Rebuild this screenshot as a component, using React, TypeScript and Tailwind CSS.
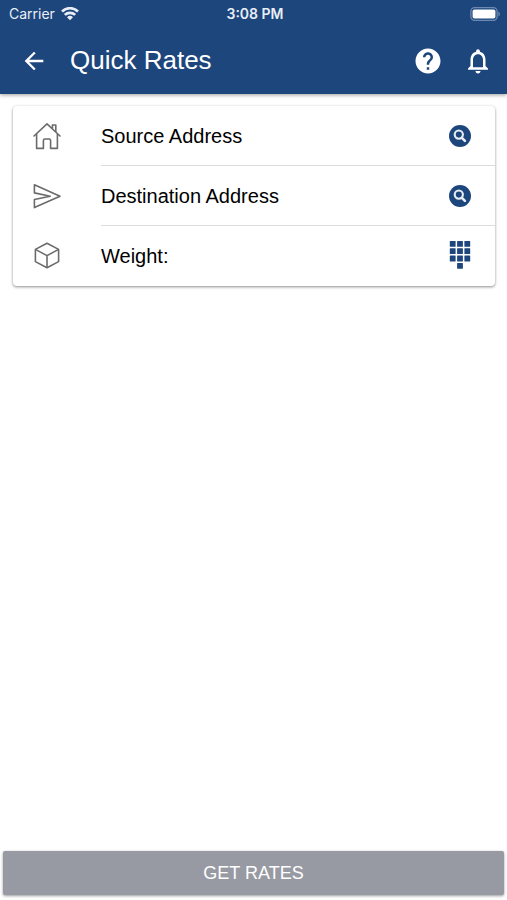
import type { ReactNode } from "react";

const WifiIcon = () => (
  <svg viewBox="0 0 18 14" className="h-3.5 w-[18px]" fill="none" stroke="currentColor" strokeWidth="2.7" aria-hidden="true">
    <path d="M1 4.4a11.6 11.6 0 0 1 16 0" />
    <path d="M3.8 7.9a7.5 7.5 0 0 1 10.4 0" />
    <path d="M9 13.2 6 10.2a4.3 4.3 0 0 1 6 0z" fill="currentColor" stroke="none" />
  </svg>
);

const BatteryIcon = () => (
  <svg viewBox="0 0 31 14" className="h-3.5 w-[31px]" aria-hidden="true">
    <rect x="0.9" y="0.7" width="26.2" height="12.6" rx="3.8" fill="none" stroke="#6d8ab3" strokeWidth="1.3" />
    <rect x="2.6" y="2.4" width="22.8" height="9.2" rx="1.8" fill="#fff" />
    <path d="M28.4 4.5c2 .9 2 4.1 0 5z" fill="#6d8ab3" />
  </svg>
);

const BackIcon = () => (
  <svg viewBox="0 0 24 24" className="size-7" fill="currentColor" aria-hidden="true">
    <path d="M20 11H7.83l5.59-5.59L12 4l-8 8 8 8 1.41-1.41L7.83 13H20v-2z" />
  </svg>
);

const HelpIcon = () => (
  <svg viewBox="0 0 24 24" className="size-[30px]" fill="currentColor" aria-hidden="true">
    <path d="M12 2C6.48 2 2 6.48 2 12s4.48 10 10 10 10-4.48 10-10S17.52 2 12 2zm1 17h-2v-2h2v2zm2.07-7.75l-.9.92C13.45 12.9 13 13.5 13 15h-2v-.5c0-1.1.45-2.1 1.17-2.83l1.24-1.26c.37-.36.59-.86.59-1.41 0-1.1-.9-2-2-2s-2 .9-2 2H8c0-2.21 1.79-4 4-4s4 1.79 4 4c0 .88-.36 1.68-.93 2.25z" />
  </svg>
);

const BellIcon = () => (
  <svg viewBox="0 0 24 24" className="size-[30px]" fill="currentColor" aria-hidden="true">
    <path d="M12 22c1.1 0 2-.9 2-2h-4c0 1.1.9 2 2 2zm6-6v-5c0-3.07-1.63-5.64-4.5-6.32V4c0-.83-.67-1.5-1.5-1.5s-1.5.67-1.5 1.5v.68C7.64 5.36 6 7.92 6 11v5l-2 2v1h16v-1l-2-2zm-2 1H8v-6c0-2.48 1.51-4.5 4-4.5s4 2.02 4 4.5v6z" />
  </svg>
);

const HomeIcon = () => (
  <svg viewBox="0 0 28 28" className="size-7" fill="none" stroke="currentColor" strokeWidth="1.6" strokeLinejoin="round" aria-hidden="true">
    <path d="M3.6 12v14.4h6.8v-8q0-1.4 1.4-1.4h4.4q1.4 0 1.4 1.4v8h6.8V12" />
    <path d="M1 14 14 1.8 27 14" strokeLinecap="round" />
    <path d="M19.4 6.6V3h3.4v7" />
  </svg>
);

const SendIcon = () => (
  <svg viewBox="0 0 28 28" className="size-7" fill="none" stroke="currentColor" strokeWidth="1.6" strokeLinejoin="round" aria-hidden="true">
    <path d="M1.4 2.8 27 14.2 1.4 25.6v-8.1l15.8-3.3-15.8-3.3z" />
  </svg>
);

const BoxIcon = () => (
  <svg viewBox="0 0 28 28" className="size-7" fill="none" stroke="currentColor" strokeWidth="1.6" strokeLinejoin="round" aria-hidden="true">
    <path d="M14 1.2 25.6 7.4v12.2L14 25.8 2.4 19.6V7.4z" />
    <path d="M2.4 7.4 14 13.6l11.6-6.2M14 13.6v12.2" />
  </svg>
);

const SearchIcon = () => (
  <svg viewBox="0 0 22 22" className="size-[22px]" fill="none" aria-hidden="true">
    <circle cx="11" cy="11" r="11" fill="#1d467c" />
    <circle cx="9.8" cy="9.6" r="4.1" stroke="#e9eef6" strokeWidth="2.1" />
    <path d="m12.9 12.8 3 3" stroke="#e9eef6" strokeWidth="2.6" strokeLinecap="round" />
  </svg>
);

const KeypadIcon = () => (
  <svg viewBox="0 0 22 30" className="h-[30px] w-[22px]" fill="#1d467c" aria-hidden="true">
    {[0, 7.3, 14.6].map((y) =>
      [0.8, 8.1, 15.4].map((x) => <rect key={`${x}-${y}`} x={x} y={y} width="5.8" height="5.8" rx="0.5" />)
    )}
    <rect x="8.1" y="21.9" width="5.8" height="5.8" rx="0.5" />
  </svg>
);

type RowProps = {
  icon: ReactNode;
  action: ReactNode;
  actionLabel: string;
  last?: boolean;
  children: ReactNode;
};

const Row = ({ icon, action, actionLabel, last, children }: RowProps) => (
  <li className="flex h-[60px] items-stretch pl-5">
    <span className="flex w-[68px] items-center text-[#6b6b6b]">{icon}</span>
    <div className={`flex min-w-0 flex-1 items-center pr-6 ${last ? "" : "border-b border-[#dcdcdc]"}`}>
      {children}
      <button type="button" aria-label={actionLabel} className="ml-auto shrink-0">
        {action}
      </button>
    </div>
  </li>
);

export default function App() {
  return (
    <div className="flex min-h-screen flex-col bg-white font-['Liberation_Sans',Arial,sans-serif] text-black">
      <header className="bg-[#1d467c] text-white shadow-[0_1px_4px_rgba(0,0,0,0.4)]">
        <div className="grid h-7 grid-cols-3 items-center pr-1.5 pl-[9px] font-['Inter',sans-serif] text-sm text-[#e9eef6]">
          <div className="flex items-center gap-1.5">
            <span>Carrier</span>
            <WifiIcon />
          </div>
          <span className="text-center font-semibold">3:08 PM</span>
          <div className="flex justify-end">
            <BatteryIcon />
          </div>
        </div>
        <div className="flex h-[66px] items-center pr-[14px] pb-px pl-5">
          <button type="button" aria-label="Back">
            <BackIcon />
          </button>
          <h1 className="ml-[22px] text-[26px]">Quick Rates</h1>
          <div className="ml-auto flex items-center gap-5">
            <button type="button" aria-label="Help">
              <HelpIcon />
            </button>
            <button type="button" aria-label="Notifications">
              <BellIcon />
            </button>
          </div>
        </div>
      </header>

      <main className="flex flex-1 flex-col">
        <ul className="mt-3 mr-3 ml-[13px] rounded-sm bg-white text-xl shadow-[0_1px_3px_rgba(0,0,0,0.45)]">
          <Row icon={<HomeIcon />} action={<SearchIcon />} actionLabel="Search source address">
            <span>Source Address</span>
          </Row>
          <Row icon={<SendIcon />} action={<SearchIcon />} actionLabel="Search destination address">
            <span>Destination Address</span>
          </Row>
          <Row icon={<BoxIcon />} action={<KeypadIcon />} actionLabel="Open keypad" last>
            <label htmlFor="weight">Weight:</label>
            <input id="weight" type="text" inputMode="decimal" className="mx-2 min-w-0 flex-1 bg-transparent outline-none" />
          </Row>
        </ul>

        <button
          type="button"
          className="mx-[3px] mt-auto mb-[5px] h-11 rounded-xs bg-[#979aa3] text-lg text-white shadow-[0_1px_3px_rgba(0,0,0,0.4)]"
        >
          GET RATES
        </button>
      </main>
    </div>
  );
}
